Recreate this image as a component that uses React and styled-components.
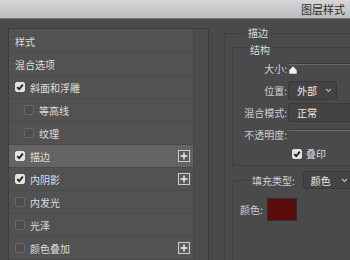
import React from 'react'
import styled, { createGlobalStyle } from 'styled-components'

const GlobalStyle = createGlobalStyle`
  html, body {
    margin: 0;
    padding: 0;
  }
  body {
    background: #4a4a4a;
    font-family: "Noto Sans CJK SC", "Noto Sans", sans-serif;
    font-size: 10px;
    color: #dcdcdc;
  }
`

const Dialog = styled.div`
  width: 350px;
  height: 260px;
  overflow: hidden;
  background: #4a4a4a;
  display: flex;
  flex-direction: column;
`

const TitleBar = styled.div`
  flex: none;
  height: 18px;
  background: linear-gradient(#d6d6d6, #bcbcbc);
  border-bottom: 1px solid #777;
  display: flex;
  align-items: center;
  justify-content: flex-end;
  padding-right: 5px;
  font-size: 11px;
  line-height: 18px;
  color: #2b2b2b;
`

const Body = styled.div`
  flex: 1;
  display: flex;
  padding: 9px 0 0 8px;
  min-height: 0;
`

const StyleList = styled.div`
  flex: none;
  width: 199px;
  display: flex;
  background: #525252;
  border: 1px solid #3d3d3d;
  border-bottom: none;
`

const Rows = styled.div`
  width: 184px;
  padding-top: 1px;
`

const Gutter = styled.div`
  flex: 1;
  background: #4b4b4b;
  border-left: 1px solid #474747;
`

const Row = styled.div`
  height: 22px;
  display: flex;
  align-items: center;
  gap: 5px;
  padding-left: ${({ indent }) => (indent ? '15px' : '6px')};
  border-bottom: 1px solid #4a4a4a;
  background: ${({ active }) => (active ? '#646464' : 'transparent')};
  color: #dedede;
  white-space: nowrap;
`

const Box = styled.span`
  flex: none;
  width: 10px;
  height: 10px;
  box-sizing: border-box;
  border-radius: 2px;
  display: flex;
  align-items: center;
  justify-content: center;
  background: ${({ checked }) => (checked ? '#e2e2e2' : '#4c4c4c')};
  border: 1px solid ${({ checked }) => (checked ? '#e2e2e2' : '#686868')};
`

const PlusButton = styled.span`
  margin-left: auto;
  margin-right: 3px;
  width: 12px;
  height: 12px;
  box-sizing: border-box;
  border: 1px solid #cfcfcf;
  background: #5a5a5a;
  display: flex;
  align-items: center;
  justify-content: center;
`

const RightPane = styled.div`
  flex: none;
  width: 200px;
  margin-left: 15px;
  padding-top: 1px;
`

const Group = styled.fieldset`
  margin: 0;
  min-width: 0;
  border: 1px solid #404040;
  border-right: none;
  padding: 0 0 0 7px;
  height: 260px;
`

const Legend = styled.legend`
  margin-left: 14px;
  padding: 0 2px;
  line-height: 8px;
  color: #dcdcdc;
`

const SubLegend = styled.legend`
  margin-left: 15px;
  padding: 6px 2px 0;
  line-height: 14px;
  color: #dcdcdc;
`

const SubGroup = styled.fieldset`
  margin: 0;
  min-width: 0;
  border: 1px solid #404040;
  border-right: none;
  padding: 1px 0 5px 0;
  display: flex;
  flex-direction: column;
  gap: 1px;
`

const FillGroup = styled.fieldset`
  margin: 5px 0 0 0;
  min-width: 0;
  border: 1px solid #404040;
  border-right: none;
  border-bottom: none;
  padding: 9px 0 0 7px;
  height: 80px;
`

const FillLegend = styled.legend`
  margin-left: 10px;
  padding: 0 2px;
  display: flex;
  align-items: center;
  gap: 8px;
  color: #d0d0d0;
`

const FormRow = styled.div`
  height: ${({ short }) => (short ? '14px' : '21px')};
  display: grid;
  grid-template-columns: 55px 1fr;
  align-items: center;
`

const Label = styled.span`
  text-align: right;
  padding-right: 1px;
  color: #d0d0d0;
  white-space: nowrap;
`

const Select = styled.div`
  width: ${({ width }) => width}px;
  height: ${({ h }) => h || 19}px;
  box-sizing: border-box;
  background: #434343;
  border: 1px solid #3a3a3a;
  border-radius: 2px;
  display: flex;
  align-items: center;
  justify-content: space-between;
  padding: 0 4px 0 ${({ pad }) => pad || 8}px;
  color: #ececec;
`

const SliderWrap = styled.div`
  display: flex;
  flex-direction: column;
  height: 11px;
  padding-left: 1px;
`

const Track = styled.div`
  height: 1px;
  background: #6c6c6c;
  border-top: 1px solid #3a3a3a;
`

const Thumb = styled.svg`
  margin-top: 1px;
  display: block;
`

const CheckLine = styled.div`
  display: flex;
  align-items: center;
  gap: 4px;
  padding-left: 4px;
  color: #dedede;
`

const ColorRow = styled.div`
  display: flex;
  align-items: center;
  gap: 4px;
  color: #d0d0d0;
`

const Swatch = styled.div`
  width: 30px;
  height: 23px;
  box-sizing: border-box;
  background: ${({ color }) => color};
  border: 1px solid #2e2e2e;
`

const Check = () => (
  <svg width="8" height="8" viewBox="0 0 8 8">
    <polyline points="1.2,4.2 3.2,6.2 6.8,1.6" fill="none" stroke="#1e1e1e" strokeWidth="1.8" />
  </svg>
)

const Checkbox = ({ checked }) => <Box checked={checked}>{checked && <Check />}</Box>

const Plus = () => (
  <PlusButton>
    <svg width="8" height="8" viewBox="0 0 8 8">
      <path d="M4 0.5V7.5M0.5 4H7.5" stroke="#f2f2f2" strokeWidth="1.4" />
    </svg>
  </PlusButton>
)

const Chevron = () => (
  <svg width="7" height="5" viewBox="0 0 7 5">
    <polyline points="1,1 3.5,3.5 6,1" fill="none" stroke="#bdbdbd" strokeWidth="1.1" />
  </svg>
)

const Slider = ({ thumb }) => (
  <SliderWrap>
    <Track />
    {thumb && (
      <Thumb width="8" height="8" viewBox="0 0 8 8">
        <path d="M4 0.3L7.7 4.2V7.7H0.3V4.2Z" fill="#f2f2f2" />
      </Thumb>
    )}
  </SliderWrap>
)

const styleRows = [
  { label: '样式' },
  { label: '混合选项' },
  { label: '斜面和浮雕', box: true, checked: true },
  { label: '等高线', box: true, indent: true },
  { label: '纹理', box: true, indent: true },
  { label: '描边', box: true, checked: true, plus: true, active: true },
  { label: '内阴影', box: true, checked: true, plus: true },
  { label: '内发光', box: true },
  { label: '光泽', box: true },
  { label: '颜色叠加', box: true, plus: true },
]

export default function App() {
  return (
    <>
      <GlobalStyle />
      <Dialog>
        <TitleBar>图层样式</TitleBar>
        <Body>
          <StyleList>
            <Rows>
              {styleRows.map((r) => (
                <Row key={r.label} indent={r.indent} active={r.active}>
                  {r.box && <Checkbox checked={r.checked} />}
                  <span>{r.label}</span>
                  {r.plus && <Plus />}
                </Row>
              ))}
            </Rows>
            <Gutter />
          </StyleList>

          <RightPane>
            <Group>
              <Legend>描边</Legend>
              <SubGroup>
                <SubLegend>结构</SubLegend>
                <FormRow>
                  <Label>大小:</Label>
                  <Slider thumb />
                </FormRow>
                <FormRow>
                  <Label>位置:</Label>
                  <Select width={49}>
                    <span>外部</span>
                    <Chevron />
                  </Select>
                </FormRow>
                <FormRow>
                  <Label>混合模式:</Label>
                  <Select width={90}>
                    <span>正常</span>
                  </Select>
                </FormRow>
                <FormRow>
                  <Label>不透明度:</Label>
                  <Slider />
                </FormRow>
                <FormRow short>
                  <span />
                  <CheckLine>
                    <Checkbox checked />
                    <span>叠印</span>
                  </CheckLine>
                </FormRow>
              </SubGroup>

              <FillGroup>
                <FillLegend>
                  <span>填充类型:</span>
                  <Select width={50} h={18} pad={7}>
                    <span>颜色</span>
                    <Chevron />
                  </Select>
                </FillLegend>
                <ColorRow>
                  <span>颜色:</span>
                  <Swatch color="#5b0c0c" />
                </ColorRow>
              </FillGroup>
            </Group>
          </RightPane>
        </Body>
      </Dialog>
    </>
  )
}
